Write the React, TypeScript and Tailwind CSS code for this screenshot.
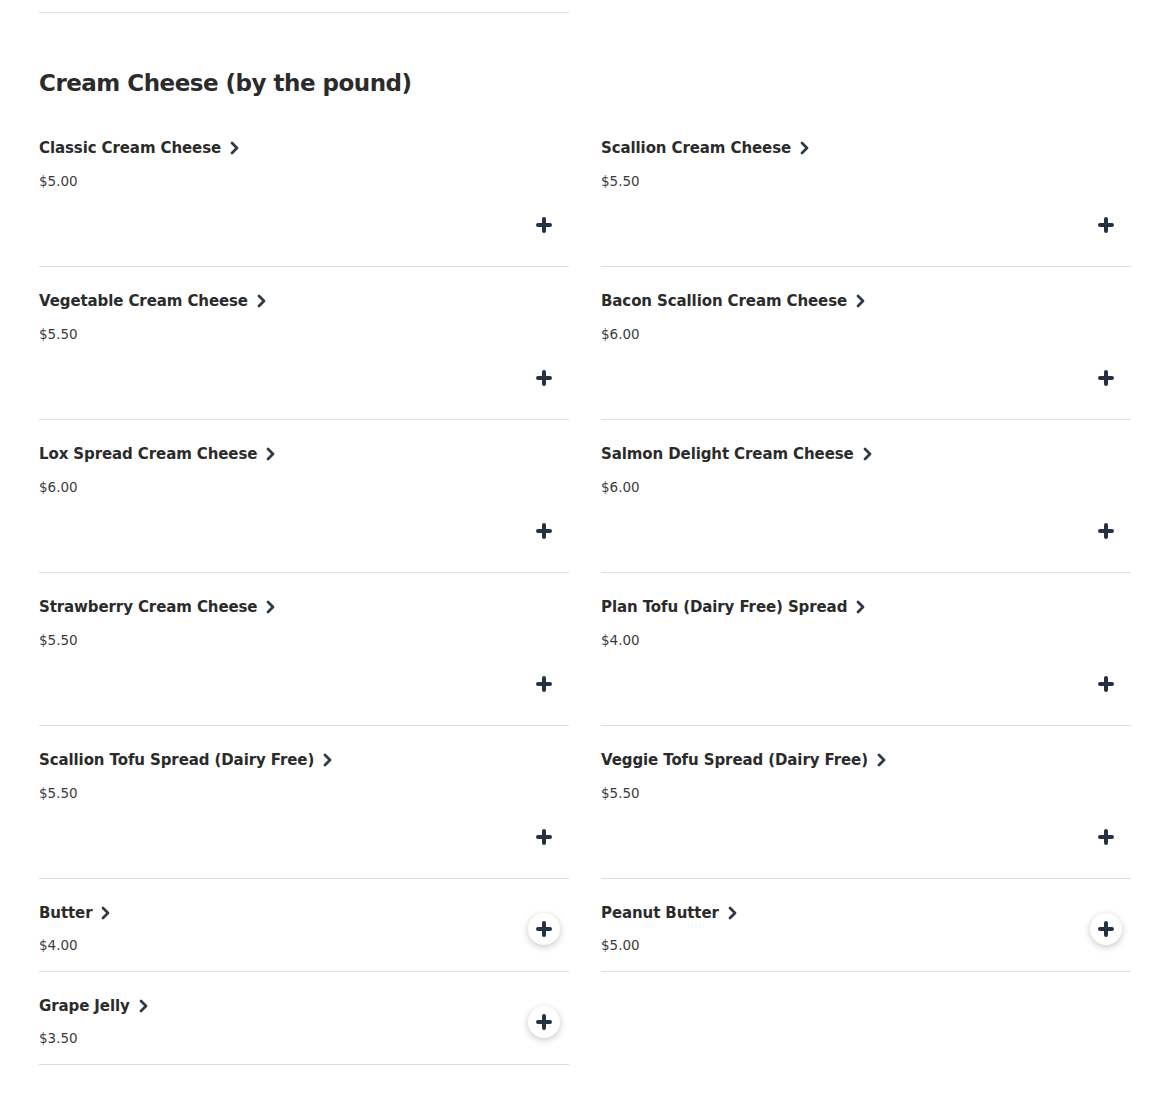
import React from "react";

type Item = { name: string; price: string };

const tallItems: Item[][] = [
  [
    { name: "Classic Cream Cheese", price: "$5.00" },
    { name: "Scallion Cream Cheese", price: "$5.50" },
  ],
  [
    { name: "Vegetable Cream Cheese", price: "$5.50" },
    { name: "Bacon Scallion Cream Cheese", price: "$6.00" },
  ],
  [
    { name: "Lox Spread Cream Cheese", price: "$6.00" },
    { name: "Salmon Delight Cream Cheese", price: "$6.00" },
  ],
  [
    { name: "Strawberry Cream Cheese", price: "$5.50" },
    { name: "Plan Tofu (Dairy Free) Spread", price: "$4.00" },
  ],
  [
    { name: "Scallion Tofu Spread (Dairy Free)", price: "$5.50" },
    { name: "Veggie Tofu Spread (Dairy Free)", price: "$5.50" },
  ],
];

const shortItems: (Item | null)[][] = [
  [
    { name: "Butter", price: "$4.00" },
    { name: "Peanut Butter", price: "$5.00" },
  ],
  [{ name: "Grape Jelly", price: "$3.50" }, null],
];

function Chevron() {
  return (
    <svg width="9" height="14" viewBox="0 0 9 14" className="ml-[9px] shrink-0">
      <path
        d="M2 2l5 5-5 5"
        fill="none"
        stroke="#2f3a48"
        strokeWidth="2.8"
        strokeLinecap="round"
        strokeLinejoin="round"
      />
    </svg>
  );
}

function PlusButton({ raised }: { raised?: boolean }) {
  return (
    <button
      className={`w-8 h-8 rounded-full bg-white flex items-center justify-center ${raised ? "shadow-[0_2px_7px_rgba(0,0,0,0.22)]" : ""}`}
    >
      <svg width="16" height="16" viewBox="0 0 16 16">
        <path
          d="M8 2v12M2 8h12"
          stroke="#263241"
          strokeWidth="4"
          strokeLinecap="round"
        />
      </svg>
    </button>
  );
}

function Title({ name }: { name: string }) {
  return (
    <div className="flex items-center h-6">
      <span className="text-[15px] font-bold text-[#2b2b2b] leading-6 tracking-[-0.1px]">
        {name}
      </span>
      <Chevron />
    </div>
  );
}

function TallCard({ item }: { item: Item }) {
  return (
    <div className="border-b border-[#dedede] pt-[22px] pb-[25px] flex flex-col">
      <Title name={item.name} />
      <div className="mt-[11px] text-[13.5px] leading-5 text-[#3c3c3c]">{item.price}</div>
      <div className="mt-[18px] flex justify-end pr-[9px]">
        <PlusButton />
      </div>
    </div>
  );
}

function ShortCard({ item }: { item: Item }) {
  return (
    <div className="border-b border-[#dedede] pt-[22px] pb-4 flex items-center">
      <div className="flex-1">
        <Title name={item.name} />
        <div className="mt-[10px] text-[13.5px] leading-5 text-[#3c3c3c]">{item.price}</div>
      </div>
      <div className="pr-[9px] mt-[2px]">
        <PlusButton raised />
      </div>
    </div>
  );
}

export default function App() {
  return (
    <div
      className="bg-white min-h-[1098px] px-[39px]"
      style={{ fontFamily: '"DejaVu Sans", "Open Sans", sans-serif' }}
    >
      <div className="grid grid-cols-2 gap-x-8">
        <div className="h-[13px] border-b border-[#dedede]" />
        <div />
      </div>
      <h2 className="mt-[52px] text-[23px] leading-9 font-bold text-[#2b2b2b] tracking-[-0.5px]">
        Cream Cheese (by the pound)
      </h2>
      <div className="mt-[13px] grid grid-cols-2 gap-x-8">
        {tallItems.map((row, i) => (
          <React.Fragment key={i}>
            {row.map((item) => (
              <TallCard key={item.name} item={item} />
            ))}
          </React.Fragment>
        ))}
        {shortItems.map((row, i) => (
          <React.Fragment key={`s${i}`}>
            {row.map((item, j) =>
              item ? <ShortCard key={item.name} item={item} /> : <div key={j} />
            )}
          </React.Fragment>
        ))}
      </div>
    </div>
  );
}
